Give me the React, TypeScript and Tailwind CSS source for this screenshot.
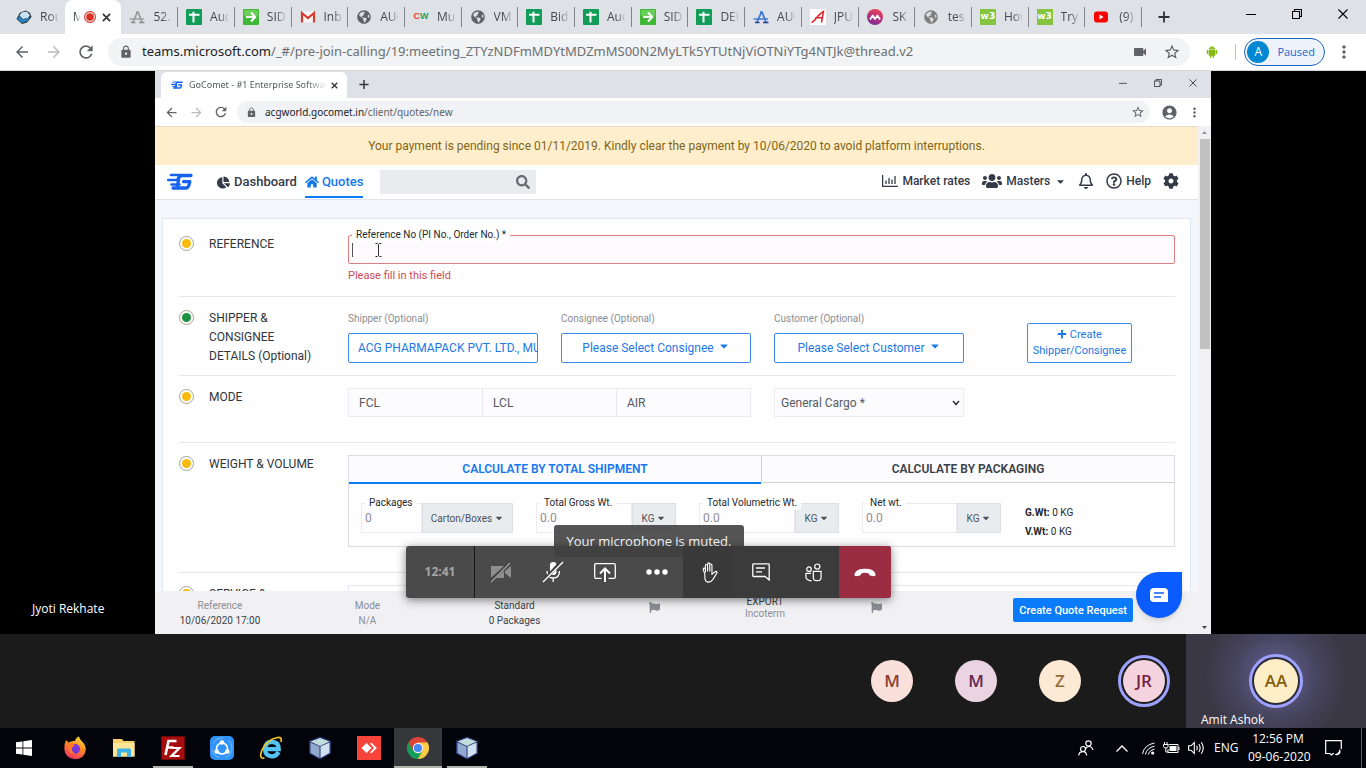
import React from "react";
import { AiFillAndroid } from "react-icons/ai";
import {
  FaCaretDown,
  FaChartPie,
  FaCog,
  FaFlag,
  FaGlobeAmericas,
  FaHome,
  FaPlus,
  FaRegBell,
  FaRegQuestionCircle,
  FaSearch,
  FaUsers,
} from "react-icons/fa";
import {
  MdAccountCircle,
  MdArrowBack,
  MdArrowForward,
  MdLock,
  MdMoreVert,
  MdRefresh,
  MdStarBorder,
  MdVideocam,
} from "react-icons/md";

/* ---------- favicons ---------- */

function CubeBlueIcon() {
  return (
    <svg viewBox="0 0 16 16" className="size-4">
      <path d="M0.500 10 L4 3.500 L10 1.500 L14 4 L15.500 8 L11 13.500 L6 15 Z" fill="#22323f" />
      <path d="M3.500 6.500 L5.500 3.500 L10.500 2.500 L14 6 L12 9 L7 10 Z" fill="#c9e3f3" />
      <path d="M1 10 L3.500 7 L7 10 L12 9 L14.500 7.500 L11.500 12 L6 14 Z" fill="#2c7fb8" />
    </svg>
  );
}

function LetterAIcon({ tone }: { tone: "grey" | "blue" | "red" }) {
  if (tone === "red") {
    return (
      <svg viewBox="0 0 16 16" className="size-4">
        <rect width="16" height="16" fill="#fff" />
        <path d="M1.500 13.500 C5 12.500 8 5 13.500 2.500 L11.500 13.500 M5 9 L12.500 8.500" fill="none" stroke="#e3222b" strokeWidth="1.500" />
      </svg>
    );
  }
  const main = tone === "grey" ? "#9b9b9b" : "#3b78d8";
  const dark = tone === "grey" ? "#8a8a8a" : "#1d3f8c";
  return (
    <svg viewBox="0 0 16 16" className="size-4">
      <path d="M4 13 L8.500 3 M7 3.200 L9 3.200 L13 13" fill="none" stroke={main} strokeWidth="1.800" />
      <path d="M0.500 10 H15" stroke={main} strokeWidth="1.400" />
      <path d="M2 13.500 H6.500 M10 13.500 H15.500" stroke={dark} strokeWidth="1.600" />
    </svg>
  );
}

function SheetsIcon() {
  return (
    <svg viewBox="0 0 16 16" className="size-4">
      <rect width="16" height="16" rx="1" fill="#119c58" />
      <path d="M3 5.800 H13.500 M7.500 2.800 V13.500" stroke="#fff" strokeWidth="2" />
    </svg>
  );
}

function GreenArrowIcon() {
  return (
    <svg viewBox="0 0 16 16" className="size-4">
      <rect width="16" height="16" rx="1" fill="#3fb935" />
      <rect x="1" y="1" width="14" height="6" fill="#67cf55" />
      <path d="M3 8 H12 M8 3.500 L12.300 8 L8 12.500" fill="none" stroke="#fff" strokeWidth="2" />
    </svg>
  );
}

function GmailIcon() {
  return (
    <svg viewBox="0 0 16 16" className="size-4">
      <rect x="1" y="2.500" width="14" height="11" rx="1" fill="#f4f4f4" />
      <path d="M2 13.500 V4 L8 9 L14 4 V13.500" fill="none" stroke="#d93a2f" strokeWidth="2.200" />
    </svg>
  );
}

function MobiIcon() {
  return (
    <svg viewBox="0 0 16 16" className="size-4">
      <defs>
        <linearGradient id="mobi" x1="0.700" y1="0" x2="0.300" y2="1">
          <stop offset="0" stopColor="#f0405a" />
          <stop offset="1" stopColor="#7a2a9b" />
        </linearGradient>
      </defs>
      <circle cx="8" cy="8" r="8" fill="url(#mobi)" />
      <path d="M3 10.500 L5.800 6.500 L8 10 L10.400 6.500 L13 10.500" fill="none" stroke="#fff" strokeWidth="1.700" strokeLinejoin="round" />
    </svg>
  );
}

function CwIcon() {
  return (
    <span className="flex size-4 items-center justify-center font-['Liberation_Sans'] text-[9px] font-bold">
      <span className="text-[#e8402f]">C</span>
      <span className="text-[#16a36a]">W</span>
    </span>
  );
}

function W3Icon() {
  return (
    <span className="flex h-4 w-4 items-center justify-center bg-[#84c43f] font-['DejaVu_Sans'] text-[9px] font-bold text-white">
      w3
    </span>
  );
}

function YoutubeIcon() {
  return (
    <svg viewBox="0 0 16 16" className="size-4">
      <rect x="1" y="2.500" width="14" height="11" rx="3" fill="#f00" />
      <path d="M6.500 5.500 L10.500 8 L6.500 10.500 Z" fill="#fff" />
    </svg>
  );
}

const globe = <FaGlobeAmericas className="size-[14px] text-[#5f6368]" />;
const globeLight = <FaGlobeAmericas className="size-[14px] text-[#808080]" />;

const browserTabs: { icon: React.ReactNode; title: string }[] = [
  { icon: <LetterAIcon tone="grey" />, title: "52.4" },
  { icon: <SheetsIcon />, title: "Auc" },
  { icon: <GreenArrowIcon />, title: "SID" },
  { icon: <GmailIcon />, title: "Inb" },
  { icon: globe, title: "AUC" },
  { icon: <CwIcon />, title: "Mu" },
  { icon: globe, title: "VM" },
  { icon: <SheetsIcon />, title: "Bid" },
  { icon: <SheetsIcon />, title: "Auc" },
  { icon: <GreenArrowIcon />, title: "SID" },
  { icon: <SheetsIcon />, title: "DEF" },
  { icon: <LetterAIcon tone="blue" />, title: "AUC" },
  { icon: <LetterAIcon tone="red" />, title: "JPU" },
  { icon: <MobiIcon />, title: "SK" },
  { icon: globeLight, title: "tes" },
  { icon: <W3Icon />, title: "How" },
  { icon: <W3Icon />, title: "Tryi" },
  { icon: <YoutubeIcon />, title: "(9)" },
];

/* ---------- small shared glyphs ---------- */

function MinimizeGlyph() {
  return (
    <svg viewBox="0 0 10 10" className="size-full">
      <path d="M0 5.500 H10" stroke="currentColor" strokeWidth="1" />
    </svg>
  );
}

function RestoreGlyph() {
  return (
    <svg viewBox="0 0 10 10" className="size-full">
      <path d="M0.500 2.500 H7.500 V9.500 H0.500 Z M2.500 2.500 V0.500 H9.500 V7.500 H7.500" fill="none" stroke="currentColor" strokeWidth="1.100" />
    </svg>
  );
}

function CrossGlyph() {
  return (
    <svg viewBox="0 0 10 10" className="size-full">
      <path d="M0.500 0.500 L9.500 9.500 M9.500 0.500 L0.500 9.500" stroke="currentColor" strokeWidth="1.100" />
    </svg>
  );
}

function BoldCross() {
  return (
    <svg viewBox="0 0 10 10" className="size-full">
      <path d="M1 1 L9 9 M9 1 L1 9" stroke="currentColor" strokeWidth="1.800" />
    </svg>
  );
}

function PlusGlyph() {
  return (
    <svg viewBox="0 0 12 12" className="size-full">
      <path d="M6 0.500 V11.500 M0.500 6 H11.500" stroke="currentColor" strokeWidth="1.800" />
    </svg>
  );
}

/* ---------- outer browser ---------- */

function BrowserTabs() {
  return (
    <div className="flex h-[34px] bg-[#dee1e6] pl-2 text-[12px] text-[#45494d]">
      <div className="grid max-w-[1134px] min-w-0 flex-1 grid-cols-[repeat(20,minmax(0,1fr))]">
        <button className="flex min-w-0 items-center gap-2 overflow-hidden pl-2">
          <span className="flex size-4 shrink-0 items-center justify-center"><CubeBlueIcon /></span>
          <span className="w-[18px] overflow-hidden whitespace-nowrap [mask-image:linear-gradient(to_right,black_50%,transparent_110%)]">Rou</span>
        </button>
        <div className="flex min-w-0 items-center rounded-t-lg bg-white pl-2">
          <span className="w-[7px] overflow-hidden [mask-image:linear-gradient(to_right,black_30%,transparent_120%)]">M</span>
          <svg viewBox="0 0 12 12" className="ml-1 size-3 shrink-0">
            <circle cx="6" cy="6" r="5.400" fill="none" stroke="#d93025" strokeWidth="1.100" />
            <circle cx="6" cy="6" r="3.800" fill="#d93025" />
          </svg>
          <button aria-label="Close tab" className="ml-[6px] size-[9px] shrink-0 text-[#303336]"><BoldCross /></button>
        </div>
        {browserTabs.map((tab, i) => (
          <button key={i} className="flex min-w-0 items-center">
            <span className="flex min-w-0 flex-1 items-center gap-2 overflow-hidden pl-2">
              <span className="flex size-4 shrink-0 items-center justify-center">{tab.icon}</span>
              <span className="w-[18px] overflow-hidden whitespace-nowrap [mask-image:linear-gradient(to_right,black_50%,transparent_110%)]">{tab.title}</span>
            </span>
            <span className="h-5 w-px shrink-0 bg-[#808387]" />
          </button>
        ))}
      </div>
      <button aria-label="New tab" className="ml-4 w-3 text-[#303336]"><PlusGlyph /></button>
      <div className="ml-auto flex pb-[6px] text-black">
        <button aria-label="Minimize" className="flex w-[46px] items-center justify-center"><span className="size-[10px]"><MinimizeGlyph /></span></button>
        <button aria-label="Restore" className="flex w-[46px] items-center justify-center"><span className="size-[10px]"><RestoreGlyph /></span></button>
        <button aria-label="Close" className="flex w-[46px] items-center justify-center"><span className="size-[10px]"><CrossGlyph /></span></button>
      </div>
    </div>
  );
}

function AddressBar() {
  return (
    <div className="flex h-[37px] items-center border-b border-[#d5d7da] bg-white pl-[13px] text-[#5f6368]">
      <button aria-label="Back"><MdArrowBack className="size-[18px]" /></button>
      <button aria-label="Forward" className="ml-[14px] text-[#babcbe]"><MdArrowForward className="size-[18px]" /></button>
      <button aria-label="Reload" className="ml-[13px]"><MdRefresh className="size-5" /></button>
      <div className="ml-3 flex h-7 min-w-0 flex-1 items-center rounded-full bg-[#f1f3f4] pr-[9px] pl-[11px]">
        <MdLock className="size-[14px] shrink-0" />
        <div className="ml-[9px] min-w-0 flex-1 overflow-hidden font-['Noto_Sans','Open_Sans',sans-serif] text-[13px] whitespace-nowrap text-[#6b6f73]">
          <span className="text-[#202124]">teams.microsoft.com</span>/_#/pre-join-calling/19:meeting_ZTYzNDFmMDYtMDZmMS00N2MyLTk5YTUtNjViOTNiYTg4NTJk@thread.v2
        </div>
        <MdVideocam className="size-4 shrink-0" />
        <button aria-label="Bookmark" className="ml-[15px]"><MdStarBorder className="size-[18px]" /></button>
      </div>
      <AiFillAndroid className="ml-[15px] size-[14px] text-[#88b814]" />
      <span className="ml-4 h-4 w-px bg-[#c3c5c8]" />
      <button className="ml-2 flex h-7 items-center gap-2 rounded-full border border-[#1a66c9] bg-[#edf2fb] pr-[9px] pl-[2px] text-[11px] font-medium text-[#1c66cc]">
        <span className="flex size-[22px] items-center justify-center rounded-full bg-[#0288d1] text-[12px] text-white">A</span>
        Paused
      </button>
      <button aria-label="Menu" className="mr-3 ml-[9px]"><MdMoreVert className="size-5" /></button>
    </div>
  );
}

/* ---------- shared screen: GoComet ---------- */

function CometLogo({ className }: { className: string }) {
  return (
    <svg viewBox="0 0 26 17" className={className}>
      <path d="M4 2 H14 M1.300 7 H12 M4.500 11.500 H12.500" stroke="#1763ef" strokeWidth="2.600" strokeLinecap="round" />
      <path d="M24 2.500 H14.500 Q11.500 3 11 7 M6 15 H19.500 Q21.800 14.500 22.800 8.700 H16.500" fill="none" stroke="#1763ef" strokeWidth="3.300" strokeLinecap="round" strokeLinejoin="round" />
      <path d="M11.500 6 L10.500 14" stroke="#1763ef" strokeWidth="3.300" />
    </svg>
  );
}

function InnerChrome() {
  return (
    <>
      <div className="flex h-[27px] items-stretch bg-[#dfe1e8] pr-px pl-[6px] text-[#33363a]">
        <div className="mt-px flex w-[186px] items-center rounded-t-md bg-white pl-[10px] text-[9px] text-[#55595e]">
          <CometLogo className="h-2 w-3" />
          <span className="ml-[6px] w-[138px] overflow-hidden font-['Noto_Sans','Open_Sans',sans-serif] whitespace-nowrap [mask-image:linear-gradient(to_right,black_85%,transparent)]">GoComet - #1 Enterprise Softwar</span>
          <button aria-label="Close tab" className="ml-1 size-[7px] shrink-0 text-[#303336]"><BoldCross /></button>
        </div>
        <button aria-label="New tab" className="ml-3 w-[10px]"><PlusGlyph /></button>
        <div className="ml-auto flex pb-1">
          <button aria-label="Minimize" className="flex w-[35px] items-center justify-center"><span className="size-2"><MinimizeGlyph /></span></button>
          <button aria-label="Restore" className="flex w-[35px] items-center justify-center"><span className="size-2"><RestoreGlyph /></span></button>
          <button aria-label="Close" className="flex w-[35px] items-center justify-center"><span className="size-2"><CrossGlyph /></span></button>
        </div>
      </div>
      <div className="flex h-[28px] items-center bg-white pr-[9px] pl-[9px] text-[#5f6368]">
        <button aria-label="Back"><MdArrowBack className="size-[15px]" /></button>
        <button aria-label="Forward" className="ml-[10px] text-[#babcbe]"><MdArrowForward className="size-[15px]" /></button>
        <button aria-label="Reload" className="ml-[9px]"><MdRefresh className="size-4" /></button>
        <div className="ml-2 flex h-[22px] min-w-0 flex-1 items-center rounded-full bg-[#f1f2f5] pr-[5px] pl-[9px]">
          <MdLock className="size-[11px]" />
          <span className="ml-2 flex-1 font-['Noto_Sans','Open_Sans',sans-serif] text-[10px]"><span className="text-[#202124]">acgworld.gocomet.in</span>/client/quotes/new</span>
          <button aria-label="Bookmark"><MdStarBorder className="size-[14px]" /></button>
        </div>
        <MdAccountCircle className="ml-[11px] size-[17px]" />
        <button aria-label="Menu" className="ml-[9px]"><MdMoreVert className="size-[15px]" /></button>
      </div>
    </>
  );
}

function SiteNav() {
  return (
    <nav className="flex h-[35px] items-start border-b border-[#dfe3eb] bg-white pr-[19px] pl-3 text-[13px] font-medium text-[#343a48]">
      <a href="#home" aria-label="GoComet" className="mt-2"><CometLogo className="h-[17px] w-[26px]" /></a>
      <a href="#dashboard" className="ml-6 flex h-[33px] items-center gap-1 pt-px">
        <FaChartPie className="size-[13px]" />
        Dashboard
      </a>
      <a href="#quotes" className="ml-2 flex h-[33px] items-center gap-[3px] border-b-2 border-[#0a7cf5] pt-[3px] text-[#1577ee]">
        <FaHome className="size-[14px]" />
        Quotes
      </a>
      <label className="mt-[5px] ml-[17px] flex h-6 w-[156px] items-center bg-[#e9ebef] pr-[6px]">
        <input type="search" aria-label="Search" className="min-w-0 flex-1 bg-transparent px-2 outline-none" />
        <FaSearch className="size-[14px] text-[#666b72]" />
      </label>
      <div className="ml-auto flex h-8 items-center text-[12px]">
        <a href="#rates" className="flex items-center gap-1">
          <svg viewBox="0 0 16 12" className="h-3 w-4">
            <path d="M0.600 0 V11.300 H16 M4 9 V5.500 M7 9 V3 M10 9 V4.500 M13 9 V1" fill="none" stroke="currentColor" strokeWidth="1.300" />
          </svg>
          Market rates
        </a>
        <button className="ml-3 flex items-center gap-1">
          <FaUsers className="size-5" />
          Masters
          <FaCaretDown className="ml-px size-[11px]" />
        </button>
        <button aria-label="Notifications" className="ml-3"><FaRegBell className="size-4" /></button>
        <a href="#help" className="ml-3 flex items-center gap-1">
          <FaRegQuestionCircle className="size-4" />
          Help
        </a>
        <button aria-label="Settings" className="ml-3"><FaCog className="size-4" /></button>
      </div>
    </nav>
  );
}

function FormRow({
  title,
  done,
  className,
  children,
}: {
  title: React.ReactNode;
  done?: boolean;
  className: string;
  children: React.ReactNode;
}) {
  return (
    <section className={"flex border-b border-[#e7e8ee] " + className}>
      <span className="mt-px flex size-[15px] shrink-0 items-center justify-center rounded-full border border-[#a9a18f] bg-white">
        <span className={done ? "size-[9px] rounded-full bg-[#1d9143]" : "size-[9px] rounded-full bg-[#fbb90b]"} />
      </span>
      <h2 className="ml-[15px] w-[139px] shrink-0 pr-4 text-[12px] leading-[19px] text-[#30353c]">{title}</h2>
      <div className="min-w-0 flex-1">{children}</div>
    </section>
  );
}

function PickButton({ id, label, value, caret }: { id: string; label: string; value: string; caret?: boolean }) {
  return (
    <div className="w-[190px] shrink-0">
      <label htmlFor={id} className="mt-[2px] block text-[10px] leading-[15px] text-[#8b8e95]">{label}</label>
      <button
        id={id}
        className={
          "mt-[7px] flex h-[30px] w-full items-center gap-1 overflow-hidden rounded-[2px] border border-[#3b8de9] bg-white text-[12px] whitespace-nowrap text-[#1c78e8] " +
          (caret ? "justify-center" : "pl-[9px]")
        }
      >
        {value}
        {caret && <FaCaretDown className="-mt-1 size-3" />}
      </button>
    </div>
  );
}

function UnitField({
  id,
  label,
  placeholder,
  unit,
  className,
  unitClass,
}: {
  id: string;
  label: string;
  placeholder: string;
  unit: string;
  className: string;
  unitClass: string;
}) {
  return (
    <div className={"relative flex h-[30px] shrink-0 " + className}>
      <label htmlFor={id} className="absolute -top-2 left-1 bg-white px-1 text-[10px] leading-[15px] whitespace-nowrap text-[#24282e]">{label}</label>
      <input id={id} placeholder={placeholder} className="min-w-0 flex-1 border border-[#efeaf2] bg-[#fefdff] pl-[3px] text-[12px] text-[#555] placeholder-[#8a8d93] outline-none" />
      <button className={"flex items-center justify-center gap-[2px] border border-[#dcdfe4] bg-[#e9ecef] text-[10px] text-[#4c5157] " + unitClass}>
        {unit}
        <FaCaretDown className="size-[10px]" />
      </button>
    </div>
  );
}

function QuoteForm() {
  return (
    <div className="mx-[7px] mt-[18px] flex-1 border border-[#dfe6ee] bg-[#fefefe] pr-[15px] pl-4">
      <FormRow title="REFERENCE" className="h-[78px] pt-4">
        <div className="relative">
          <label htmlFor="ref-no" className="absolute -top-2 left-1 bg-white px-1 text-[10px] leading-[15px] text-[#24282e]">
            Reference No (PI No., Order No.) *
          </label>
          <input id="ref-no" className="block h-[29px] w-full rounded-[2px] border border-[#e07f83] bg-[#fdfbfd] px-1 text-[12px] outline-none" />
          <span className="absolute top-[8px] left-1 h-[14px] w-px bg-[#555]" />
          <svg viewBox="0 0 7 14" className="absolute top-[8px] left-[27px] h-[14px] w-[7px]">
            <path d="M0.500 0.500 H2.500 L3.500 1.500 L4.500 0.500 H6.500 M3.500 1.500 V12.500 M0.500 13.500 H2.500 L3.500 12.500 L4.500 13.500 H6.500" fill="none" stroke="#333" strokeWidth="1" />
          </svg>
          <p className="mt-1 text-[11px] leading-[15px] text-[#cf4a52]">Please fill in this field</p>
        </div>
      </FormRow>

      <FormRow
        done
        className="h-[79px] pt-3"
        title={
          <>
            SHIPPER &amp;<br />CONSIGNEE<br />DETAILS (Optional)
          </>
        }
      >
        <div className="flex gap-[23px]">
          <PickButton id="shipper" label="Shipper (Optional)" value="ACG PHARMAPACK PVT. LTD., MUMBAI" />
          <PickButton id="consignee" label="Consignee (Optional)" value="Please Select Consignee" caret />
          <PickButton id="customer" label="Customer (Optional)" value="Please Select Customer" caret />
          <button className="mt-[14px] mr-[43px] ml-auto h-10 w-[105px] rounded-[2px] border border-[#3b8de9] bg-white text-[11px] leading-4 text-[#1c78e8]">
            <FaPlus className="inline size-[10px] align-[-1px]" /> Create Shipper/Consignee
          </button>
        </div>
      </FormRow>

      <FormRow title="MODE" className="h-[67px] pt-3">
        <div className="flex gap-[23px]">
          <div className="flex h-[29px] w-[403px] divide-x divide-[#e9e6ee] border border-[#efeaf2] bg-[#fcfbfd] text-[12px] text-[#555a61]">
            <button className="flex-1 pl-[10px] text-left">FCL</button>
            <button className="flex-1 pl-[10px] text-left">LCL</button>
            <button className="flex-1 pl-[10px] text-left">AIR</button>
          </div>
          <div className="relative w-[190px]">
            <select aria-label="Cargo type" className="h-[29px] w-full appearance-none border border-[#efeaf2] bg-[#fcfbfd] pl-[6px] text-[12px] text-[#555a61] outline-none">
              <option>General Cargo *</option>
            </select>
            <svg viewBox="0 0 8 6" className="pointer-events-none absolute top-3 right-1 h-[6px] w-2">
              <path d="M1 1 L4 4.500 L7 1" fill="none" stroke="#33363a" strokeWidth="1.600" />
            </svg>
          </div>
        </div>
      </FormRow>

      <FormRow title="WEIGHT & VOLUME" className="h-[130px] pt-3">
        <div className="h-[92px] border border-[#dcdde3]">
          <div className="flex h-[27px] text-[12px] font-semibold">
            <button className="h-[28px] flex-1 border-b-2 border-[#0a7cf5] bg-[#fcfbfd] text-[#1577ee]">CALCULATE BY TOTAL SHIPMENT</button>
            <button className="flex-1 border-b border-l border-[#cfd1d6] bg-[#fcfbfd] text-[#3a3f46]">CALCULATE BY PACKAGING</button>
          </div>
          <div className="flex pt-5 pl-3">
            <UnitField id="packages" label="Packages" placeholder="0" unit="Carton/Boxes" className="w-[152px]" unitClass="w-[91px]" />
            <UnitField id="gross" label="Total Gross Wt." placeholder="0.0" unit="KG" className="ml-[23px] w-[140px]" unitClass="w-11" />
            <UnitField id="volumetric" label="Total Volumetric Wt." placeholder="0.0" unit="KG" className="ml-[23px] w-[140px]" unitClass="w-11" />
            <UnitField id="net" label="Net wt." placeholder="0.0" unit="KG" className="ml-[23px] w-[139px]" unitClass="w-11" />
            <div className="ml-6 text-[10px] leading-[19px] text-[#24282e]">
              <p><b>G.Wt:</b> 0 KG</p>
              <p><b>V.Wt:</b> 0 KG</p>
            </div>
          </div>
        </div>
      </FormRow>

      <FormRow title={<>SERVICE &amp;</>} className="pt-3">
        <div className="h-10 border border-[#e7e8ee]" />
      </FormRow>
    </div>
  );
}

function SummaryBar() {
  return (
    <footer className="flex h-[43px] shrink-0 items-start bg-[#f1f1f4] pt-[7px] text-center text-[10px] leading-[15px] text-[#8b8e95]">
      <div className="w-[130px]">
        <p>Reference</p>
        <p className="text-[#3c4148]">10/06/2020 17:00</p>
      </div>
      <div className="w-[165px]">
        <p>Mode</p>
        <p>N/A</p>
      </div>
      <div className="w-[129px] text-[#3c4148]">
        <p>Standard</p>
        <p>0 Packages</p>
      </div>
      <div className="flex w-[151px] justify-center pt-1"><FaFlag className="size-[11px]" /></div>
      <div className="-mt-[2px] w-[70px] leading-3">
        <p className="text-[#3c4148]">EXPORT</p>
        <p>Incoterm</p>
      </div>
      <div className="flex w-[152px] justify-center pt-1"><FaFlag className="size-[11px]" /></div>
      <button className="mr-[65px] ml-auto h-6 rounded-[2px] bg-[#0a7cf9] px-[6px] text-[11px] font-medium text-white">Create Quote Request</button>
    </footer>
  );
}

function SharedScreen() {
  return (
    <div className="flex h-full min-w-0 flex-1 flex-col overflow-hidden bg-[#f3f6fb]">
      <InnerChrome />
      <div className="flex min-h-0 flex-1 font-['Roboto',sans-serif]">
        <div className="relative flex min-w-0 flex-1 flex-col">
          <div className="flex h-[39px] shrink-0 items-center justify-center border-t border-[#e3dcc8] bg-[#feeecb] text-[12px] text-[#806515]">
            Your payment is pending since 01/11/2019. Kindly clear the payment by 10/06/2020 to avoid platform interruptions.
          </div>
          <SiteNav />
          <div className="flex min-h-0 flex-1 flex-col overflow-hidden">
            <QuoteForm />
          </div>
          <SummaryBar />
          <button aria-label="Chat" className="absolute right-4 bottom-4 flex size-[46px] items-center justify-center rounded-full rounded-tr-md bg-[#0a5cff] shadow-md">
            <svg viewBox="0 0 18 14" className="h-[14px] w-[18px]">
              <path d="M4 0 H14 Q18 0 18 4 V14 H4 Q0 14 0 10 V4 Q0 0 4 0 Z" fill="#fff" />
              <path d="M4 5 H14 M4 9 H11" stroke="#0a5cff" strokeWidth="1.600" />
            </svg>
          </button>
        </div>
        <div className="flex w-[13px] flex-col items-center bg-[#f1f1f4] py-[5px]">
          <svg viewBox="0 0 5 3" className="h-[3px] w-[5px]"><path d="M0 3 L2.500 0 L5 3 Z" fill="#999" /></svg>
          <span className="mt-[5px] h-[210px] w-[10px] bg-[#c1c1c1]" />
          <svg viewBox="0 0 5 3" className="mt-auto h-[3px] w-[5px]"><path d="M0 0 L2.500 3 L5 0 Z" fill="#444" /></svg>
        </div>
      </div>
    </div>
  );
}

/* ---------- call controls ---------- */

function CallControls() {
  const cell = "flex h-full w-[52px] items-center justify-center";
  return (
    <div className="absolute bottom-9 left-[406px]">
      <div className="absolute -top-[21px] left-[148px] h-8 w-[190px] rounded-[3px] bg-[#424242]/90 pt-[6px] text-center text-[13px] leading-5 text-white">
        Your microphone is muted.
      </div>
      <div className="relative flex h-[52px] w-[485px] overflow-hidden rounded-[3px] bg-[#404040]/95 text-white shadow-[0_2px_10px_rgba(0,0,0,0.5)]">
        <span className="flex w-[69px] items-center justify-center border-r border-[#151515] text-[12px] font-bold text-[#a5a5a5]">12:41</span>
        <button aria-label="Turn camera on" className={cell}>
          <svg viewBox="0 0 22 22" className="size-[22px]">
            <path d="M1 5 H14 V17 H1 Z M15 10 L21 5 V17 L15 12 Z" fill="#8f8f8f" />
            <path d="M0 20 L20 2" stroke="#404040" strokeWidth="3.500" />
            <path d="M1 21 L20 2" stroke="#a0a0a0" strokeWidth="1.300" />
          </svg>
        </button>
        <button aria-label="Unmute" className={cell}>
          <svg viewBox="0 0 22 22" className="size-[22px]">
            <rect x="8" y="1" width="6.500" height="13" rx="3.200" fill="#fff" />
            <path d="M5 10 Q5 17 11 17 Q17.500 17 17.500 10 M11.200 17 V21" fill="none" stroke="#fff" strokeWidth="1.300" />
            <path d="M2 19.500 L19.500 0.500" stroke="#404040" strokeWidth="3.500" />
            <path d="M1 21 L21 1" stroke="#fff" strokeWidth="1.400" />
          </svg>
        </button>
        <button aria-label="Share" className={cell}>
          <svg viewBox="0 0 22 20" className="h-5 w-[22px]">
            <path d="M7.500 16.300 H2 Q0.700 16.300 0.700 15 V3 Q0.700 1.700 2 1.700 H20 Q21.300 1.700 21.300 3 V15 Q21.300 16.300 20 16.300 H14.500" fill="none" stroke="#fff" strokeWidth="1.300" />
            <path d="M11 20 V7 M6 11.500 L11 6.500 L16 11.500" fill="none" stroke="#fff" strokeWidth="2" />
          </svg>
        </button>
        <button aria-label="More actions" className={cell}>
          <svg viewBox="0 0 22 6" className="h-[6px] w-[22px]" fill="#fff">
            <circle cx="3" cy="3" r="2.700" /><circle cx="11" cy="3" r="2.700" /><circle cx="19" cy="3" r="2.700" />
          </svg>
        </button>
        <button aria-label="Raise hand" className={cell + " bg-[#393939]"}>
          <svg viewBox="0 0 18 22" className="h-[21px] w-[17px]">
            <path d="M4 12.500 L2.500 8.500 Q2 6.500 3.200 6.300 Q4.200 6.200 4.700 8 V3.500 Q4.800 2.300 5.800 2.300 Q6.900 2.300 7 3.500 V2 Q7.100 0.800 8.200 0.800 Q9.300 0.800 9.300 2 V3 Q9.400 2 10.400 2 Q11.500 2 11.600 3.200 V13 L14.500 10.500 Q16 9.300 17 10.500 Q17.300 11 16.500 12 L12.500 18.500 Q11 21.200 8 21.200 Q5 21.200 4.200 18 Z M7 3.500 V10 M9.300 3 V10 M4.700 8 V11" fill="none" stroke="#fff" strokeWidth="1.200" strokeLinejoin="round" />
          </svg>
        </button>
        <button aria-label="Chat" className={cell + " bg-[#3b3b3b]"}>
          <svg viewBox="0 0 18 18" className="size-[18px]">
            <path d="M1.500 0.800 H16.500 Q17.200 0.800 17.200 1.500 V17 L13 13.500 H1.500 Q0.800 13.500 0.800 12.800 V1.500 Q0.800 0.800 1.500 0.800 Z M4 5 H13 M4 8.800 H10" fill="none" stroke="#fff" strokeWidth="1.300" />
          </svg>
        </button>
        <button aria-label="People" className={cell + " bg-[#3b3b3b]"}>
          <svg viewBox="0 0 18 20" className="h-[19px] w-[17px]">
            <g fill="none" stroke="#fff" strokeWidth="1.300">
              <circle cx="4.200" cy="6.500" r="2.400" />
              <circle cx="13" cy="3.700" r="2.700" />
              <path d="M8.800 8.700 H17 V15 Q17 18.700 13.500 18.700 H12.300 Q8.800 18.700 8.800 15 Z M6.500 11 H1 V14 Q1 18 5 18.500 H7" />
            </g>
          </svg>
        </button>
        <button aria-label="Hang up" className="flex h-full w-[52px] items-center justify-center bg-[#9a2d42]">
          <svg viewBox="0 0 22 9" className="h-[9px] w-[22px]">
            <path d="M0.500 6 Q2 0.800 11 0.800 Q20 0.800 21.500 6 Q21.800 8.500 20 8.300 L16 7.500 Q14.800 7.200 14.800 5.500 Q11 4 7.200 5.500 Q7.200 7.200 6 7.500 L2 8.300 Q0.200 8.500 0.500 6 Z" fill="#fff" />
          </svg>
        </button>
      </div>
    </div>
  );
}

/* ---------- participants ---------- */

const participants = [
  { initials: "M", tone: "bg-[#fae0da] text-[#8c4136]" },
  { initials: "M", tone: "bg-[#ead4e1] text-[#65284f]" },
  { initials: "Z", tone: "bg-[#fdead5] text-[#966a34]" },
];

function Participants() {
  return (
    <div className="flex h-[94px] shrink-0 items-stretch justify-end bg-[#1b1b1b] text-[17px] font-semibold">
      {participants.map((p, i) => (
        <div key={i} className="flex w-[84px] items-center justify-center">
          <span className={"flex size-[42px] items-center justify-center rounded-full " + p.tone}>{p.initials}</span>
        </div>
      ))}
      <div className="flex w-[84px] items-center justify-center">
        <span className="flex size-[52px] items-center justify-center rounded-full border-[3px] border-[#9ea2ff]">
          <span className="flex size-[42px] items-center justify-center rounded-full bg-[#f4d3df] text-[#74203f]">JR</span>
        </span>
      </div>
      <div className="relative flex w-[180px] items-center justify-center bg-[#3b3846] bg-[radial-gradient(circle_at_50%_45%,#57547f_20px,#46435c_44px,#3b3846_70px)]">
        <span className="flex size-[54px] items-center justify-center rounded-full border-[3px] border-[#9ea2ff] bg-[#2c2a36]">
          <span className="flex size-11 items-center justify-center rounded-full bg-[#feeec8] text-[#835f0c]">AA</span>
        </span>
        <span className="absolute bottom-0 left-[15px] text-[12px] leading-4 font-normal text-white">Amit Ashok</span>
      </div>
    </div>
  );
}

/* ---------- taskbar ---------- */

function FirefoxIcon() {
  return (
    <svg viewBox="0 0 24 24" className="size-6">
      <defs>
        <linearGradient id="ff" x1="0.800" y1="0" x2="0.300" y2="1">
          <stop offset="0" stopColor="#ffe03b" />
          <stop offset="0.450" stopColor="#ff8a20" />
          <stop offset="1" stopColor="#f0306a" />
        </linearGradient>
      </defs>
      <path d="M3 4 L5.500 6.500 Q8 4.500 12 5 Q12.500 2 16 0.500 Q16.500 3.500 19 5.500 Q23 9 22.700 14 Q21.500 23 12 23.300 Q2 22.500 1.300 13 Q1 8 3 4 Z" fill="url(#ff)" />
      <circle cx="12" cy="13" r="5" fill="#7a35d8" />
      <path d="M4 9 Q8 6.500 12 9.500 L9 11.500 Q8 16 12.500 17.500 Q6 19 4 9 Z" fill="#ff7a24" />
    </svg>
  );
}

function FolderIcon() {
  return (
    <svg viewBox="0 0 22 20" className="h-5 w-[22px]">
      <path d="M0 1 H9 L10.500 3 H21.500 V18.500 H0 Z" fill="#f7d06b" />
      <path d="M0 5 H21.500 V18.500 H0 Z" fill="#fde59a" />
      <path d="M4 19 V12 Q4 10.500 5.500 10.500 H16.500 Q18 10.500 18 12 V19 H14 V14.500 H8 V19 Z" fill="#3bb3e8" />
    </svg>
  );
}

function FileZillaIcon() {
  return (
    <svg viewBox="0 0 24 24" className="size-6">
      <rect x="0.500" y="0.500" width="23" height="23" fill="#a80d0d" stroke="#7c0404" strokeDasharray="2 1" />
      <path d="M4.500 19 L7.500 5 H15.500 M6.500 11.500 H12.500" fill="none" stroke="#fff" strokeWidth="2.600" />
      <path d="M11.500 12 H18.500 L10.500 20 H18.500" fill="none" stroke="#fff" strokeWidth="2.200" />
    </svg>
  );
}

function ShareItIcon() {
  return (
    <svg viewBox="0 0 24 24" className="size-6">
      <rect width="24" height="24" rx="5" fill="#3093f8" />
      <circle cx="12" cy="12" r="10" fill="none" stroke="#8cc6fd" strokeWidth="0.800" strokeDasharray="12 6" />
      <circle cx="12" cy="12.500" r="5.500" fill="none" stroke="#fff" strokeWidth="1.600" />
      <circle cx="12" cy="6.500" r="2.300" fill="#fff" />
      <circle cx="6.700" cy="15.500" r="2.300" fill="#fff" />
      <circle cx="17.300" cy="15.500" r="2.300" fill="#fff" />
    </svg>
  );
}

function ExplorerIcon() {
  return (
    <svg viewBox="0 0 24 24" className="size-6">
      <path d="M19.500 16 Q17.500 20.300 12.800 20.300 Q6 19.800 6 13 Q6.300 5.800 13 5.800 Q20 6 19.800 13.200 H7" fill="none" stroke="#54c4f4" strokeWidth="4.200" />
      <path d="M22 6 Q23.500 1 18.500 1.500 Q8 3.500 3 14 Q-0.500 23.500 5.500 22" fill="none" stroke="#f0c32a" strokeWidth="1.700" />
    </svg>
  );
}

function CubeIcon() {
  return (
    <svg viewBox="0 0 24 24" className="size-6">
      <path d="M12 0.500 L23 5 V17.500 L12 23.500 L1 17.500 V5 Z" fill="#26356e" />
      <path d="M12 2 L21.500 5.500 L12 10 L2.500 5.500 Z" fill="#c4dcdc" />
      <path d="M2.500 6.500 L11.500 10.500 V22 L2.500 17 Z" fill="#92a9d0" />
      <path d="M21.500 6.500 L12.500 10.500 V22 L21.500 17 Z" fill="#d0e0ef" />
    </svg>
  );
}

function AnyDeskIcon() {
  return (
    <svg viewBox="0 0 24 24" className="size-6">
      <rect width="24" height="24" fill="#f8443a" />
      <path d="M9.500 7 L14.500 12 L9.500 17 L4.500 12 Z" fill="#fff" />
      <path d="M13 7.500 L14.500 6.800 L19.800 12 L14.500 17.200 L13 16.500 L17 12 Z" fill="#fff" />
    </svg>
  );
}

function ChromeIcon() {
  return (
    <svg viewBox="0 0 24 24" className="size-[22px]">
      <path d="M12 12 L1.600 6 A12 12 0 0 1 22.400 6 Z" fill="#dc4437" />
      <path d="M12 12 L22.400 6 A12 12 0 0 1 12 24 Z" fill="#fdcc45" />
      <path d="M12 12 L12 24 A12 12 0 0 1 1.600 6 Z" fill="#159d58" />
      <path d="M12 6 H22.400 L18 13 Z" fill="#fdcc45" />
      <path d="M1.600 6 L7 15 L10 12 L12 6 Z" fill="#dc4437" />
      <path d="M6.800 15 L12 24 L17.200 15 Z" fill="#159d58" />
      <path d="M12 24 L17.200 15 L20 13 L22 17 Z" fill="#fdcc45" />
      <circle cx="12" cy="12" r="5.600" fill="#f1f1f1" />
      <circle cx="12" cy="12" r="4.400" fill="#4687f4" />
    </svg>
  );
}

const apps: { name: string; icon: React.ReactNode; state?: "open" | "active" }[] = [
  { name: "Firefox", icon: <FirefoxIcon /> },
  { name: "File Explorer", icon: <FolderIcon /> },
  { name: "FileZilla", icon: <FileZillaIcon />, state: "open" },
  { name: "SHAREit", icon: <ShareItIcon /> },
  { name: "Internet Explorer", icon: <ExplorerIcon /> },
  { name: "NetBeans", icon: <CubeIcon /> },
  { name: "AnyDesk", icon: <AnyDeskIcon /> },
  { name: "Chrome", icon: <ChromeIcon />, state: "active" },
  { name: "NetBeans window", icon: <CubeIcon />, state: "open" },
];

function Taskbar() {
  return (
    <div className="flex h-10 shrink-0 items-stretch bg-[#02040a] text-white">
      <button aria-label="Start" className="mr-[3px] flex w-12 items-center justify-center">
        <svg viewBox="0 0 16 16" className="size-4" fill="#fff">
          <path d="M0 2.300 L6.500 1.400 V7.500 H0 Z M7.300 1.300 L16 0 V7.500 H7.300 Z M0 8.400 H6.500 V14.600 L0 13.700 Z M7.300 8.400 H16 V16 L7.300 14.700 Z" />
        </svg>
      </button>
      <div className="flex gap-px">
        {apps.map((app) => (
          <button
            key={app.name}
            aria-label={app.name}
            className={"flex w-12 flex-col items-center " + (app.state === "active" ? "bg-[#35373a]" : "")}
          >
            <span className="flex flex-1 items-center pt-px">{app.icon}</span>
            <span className={"h-[2px] " + (app.state === "active" ? "w-12 bg-[#b4b3ad]" : app.state === "open" ? "w-10 bg-[#b4b3ad]" : "w-10")} />
          </button>
        ))}
      </div>
      <div className="ml-auto flex items-center text-[12px]">
        <svg viewBox="0 0 16 16" className="mr-[22px] size-4" fill="none" stroke="#fff" strokeWidth="1.200">
          <circle cx="10.500" cy="3.500" r="2.700" />
          <path d="M7.500 9 Q8.500 6.500 11 6.500 Q14 6.500 15 10" />
          <circle cx="5" cy="9" r="2.500" />
          <path d="M0.800 15.500 Q1 11.700 5 11.700 Q8.300 11.700 8.700 15.500" />
        </svg>
        <svg viewBox="0 0 12 7" className="mr-[14px] h-[7px] w-3" fill="none" stroke="#fff" strokeWidth="1.300">
          <path d="M0.500 6.500 L6 1 L11.500 6.500" />
        </svg>
        <svg viewBox="0 0 13 13" className="mr-[8px] size-[13px]" fill="none" stroke="#fff" strokeWidth="1">
          <path d="M0.500 12 Q2 3 12.500 1 M3.500 12.500 Q4.500 6 12.500 4.200 M6.500 12.500 Q7 8.500 12.500 7.200" />
          <circle cx="10.700" cy="11" r="1.600" fill="#fff" stroke="none" />
        </svg>
        <svg viewBox="0 0 17 12" className="mr-2 h-3 w-[17px]">
          <path d="M5.500 2.500 H15 V10.500 H5 V7 M16 5 V8 M1.500 0 V2 M4 0 V2 M0.500 2.500 H5 V4.500 Q5 6 2.800 6 Q0.500 6 0.500 4.500 Z M2.800 6 V10 H5" fill="none" stroke="#fff" strokeWidth="1" />
          <rect x="6.500" y="4" width="7" height="5" fill="#fff" />
        </svg>
        <svg viewBox="0 0 17 14" className="mr-[9px] h-[14px] w-[17px]" fill="none" stroke="#fff" strokeWidth="1.100">
          <path d="M0.600 4.800 H3 L6.300 1.500 V12.500 L3 9.200 H0.600 Z M8.500 4.700 Q10 7 8.500 9.300 M10.800 3 Q13.500 7 10.800 11 M13.200 1.300 Q17.300 7 13.200 12.700" />
        </svg>
        <span className="w-6">ENG</span>
        <div className="mr-[17px] ml-[10px] w-[60px] text-center leading-[18px] whitespace-nowrap">
          <p>12:56 PM</p>
          <p>09-06-2020</p>
        </div>
        <svg viewBox="0 0 17 17" className="mr-[19px] size-[17px]">
          <path d="M9 13.500 H8 L6.500 15 L5 13.500 H0.700 V0.700 H16.300 V9" fill="none" stroke="#fff" strokeWidth="1.200" />
          <path d="M14.500 9 Q17 12 14 14.500 Q11.500 16 9.500 14.500 Q14 13.500 14.500 9 Z" fill="#fff" />
        </svg>
        <span className="mr-1 h-10 w-px bg-[#5c5e62]" />
      </div>
    </div>
  );
}

export default function App() {
  return (
    <div className="flex min-h-screen flex-col bg-black font-['Open_Sans','Noto_Sans',sans-serif]">
      <header>
        <BrowserTabs />
        <AddressBar />
      </header>
      <main className="relative flex h-[563px] shrink-0 bg-black">
        <div className="flex w-[155px] shrink-0 items-end pb-4 pl-8 text-[12px] leading-[18px] text-white">Jyoti Rekhate</div>
        <SharedScreen />
        <div className="w-[155px] shrink-0" />
        <CallControls />
      </main>
      <Participants />
      <Taskbar />
    </div>
  );
}
